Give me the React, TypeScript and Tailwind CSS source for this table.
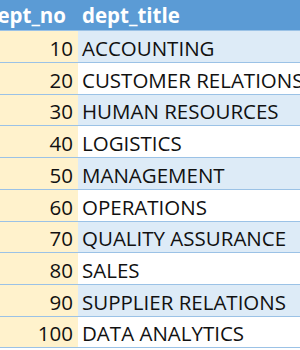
const rows = [
  { no: 10, title: 'ACCOUNTING', h: 'h-[32px]' },
  { no: 20, title: 'CUSTOMER RELATIONS', h: 'h-[32px]' },
  { no: 30, title: 'HUMAN RESOURCES', h: 'h-[31px]' },
  { no: 40, title: 'LOGISTICS', h: 'h-[32px]' },
  { no: 50, title: 'MANAGEMENT', h: 'h-[32px]' },
  { no: 60, title: 'OPERATIONS', h: 'h-[32px]' },
  { no: 70, title: 'QUALITY ASSURANCE', h: 'h-[31px]' },
  { no: 80, title: 'SALES', h: 'h-[32px]' },
  { no: 90, title: 'SUPPLIER RELATIONS', h: 'h-[32px]' },
  { no: 100, title: 'DATA ANALYTICS', h: 'h-[31px]' },
]

export default function App() {
  return (
    <div className="w-[300px] h-[350px] overflow-hidden bg-white text-[20.5px] font-['Open_Sans',sans-serif] text-[#111]">
      <div className="flex h-[31px] bg-[#5b9bd5] border-b border-[#9bc2e6] text-white font-bold leading-none">
        <div className="w-[78px] shrink-0 flex items-center justify-end pr-[12px] overflow-hidden">
          <span className="whitespace-nowrap">dept_no</span>
        </div>
        <div className="flex-1 flex items-center pl-[4px] whitespace-nowrap">dept_title</div>
      </div>
      {rows.map((r, i) => (
        <div key={r.no} className={`flex ${r.h} border-b border-[#9bc2e6] leading-none`}>
          <div className="w-[78px] shrink-0 bg-[#fff2cc] flex items-center justify-end pr-[5px] pt-[3px]">
            {r.no}
          </div>
          <div
            className={`flex-1 flex items-center pl-[4px] pt-[3px] whitespace-nowrap overflow-hidden ${
              i % 2 === 0 ? 'bg-[#ddebf7]' : 'bg-white'
            }`}
          >
            {r.title}
          </div>
        </div>
      ))}
    </div>
  )
}
